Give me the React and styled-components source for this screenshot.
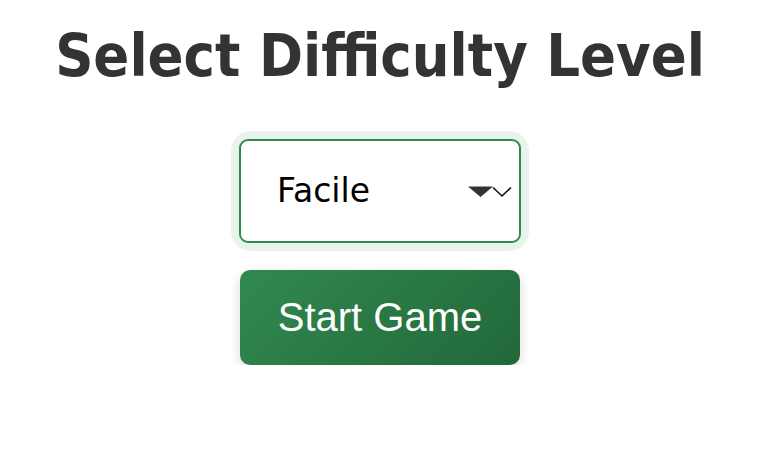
import React, { useState } from "react";
import styled, { createGlobalStyle } from "styled-components";

const GlobalStyle = createGlobalStyle`
  body {
    margin: 0;
    background: #fff;
    font-family: "DejaVu Sans", sans-serif;
  }
`;

const App = () => {
  const [level, setLevel] = useState("facile");

  return (
    <>
      <GlobalStyle />
      <StPage>
        <StTitle>Select Difficulty Level</StTitle>
        <StSelectWrap>
          <StSelect value={level} onChange={(e) => setLevel(e.target.value)}>
            <option value="facile">Facile</option>
            <option value="moyen">Moyen</option>
            <option value="difficile">Difficile</option>
          </StSelect>
          <StArrow width="44" height="12" viewBox="0 0 44 12">
            <polygon points="0,0.5 25,0.5 12.5,11" fill="#333" />
            <polyline
              points="25,1.5 34,10 43,1.5"
              fill="none"
              stroke="#111"
              strokeWidth="1.6"
            />
          </StArrow>
        </StSelectWrap>
        <StStartBtn>Start Game</StStartBtn>
      </StPage>
    </>
  );
};

const StPage = styled.div`
  display: flex;
  flex-direction: column;
  align-items: center;
  padding-top: 21px;
  padding-right: 4px;
`;
const StTitle = styled.h1`
  margin: 0 0 47px;
  font-family: "DejaVu Sans Condensed", "DejaVu Sans", sans-serif;
  font-weight: bold;
  font-size: 59px;
  line-height: 1.2;
  color: #333;
`;
const StSelectWrap = styled.div`
  position: relative;
  border-radius: 12px;
  box-shadow: 0 0 0 8px #e8f3ec;
`;
const StSelect = styled.select`
  display: block;
  appearance: none;
  width: 282px;
  height: 104px;
  padding: 0 60px 0 36px;
  border: 2px solid #2e8b4f;
  border-radius: 9px;
  background: #fff;
  color: #000;
  font-family: "DejaVu Sans", Verdana, sans-serif;
  font-size: 33px;
  outline: none;
`;
const StArrow = styled.svg`
  position: absolute;
  top: 47px;
  right: 9px;
  pointer-events: none;
`;
const StStartBtn = styled.button`
  margin-top: 27px;
  width: 280px;
  height: 95px;
  border: none;
  border-radius: 10px;
  background: linear-gradient(135deg, #31894f 0%, #226839 100%);
  box-shadow: 0 4px 12px rgba(0, 0, 0, 0.15);
  color: #fff;
  font-family: "Liberation Sans", Arial, sans-serif;
  font-size: 40px;
  cursor: pointer;
`;

export default App;
